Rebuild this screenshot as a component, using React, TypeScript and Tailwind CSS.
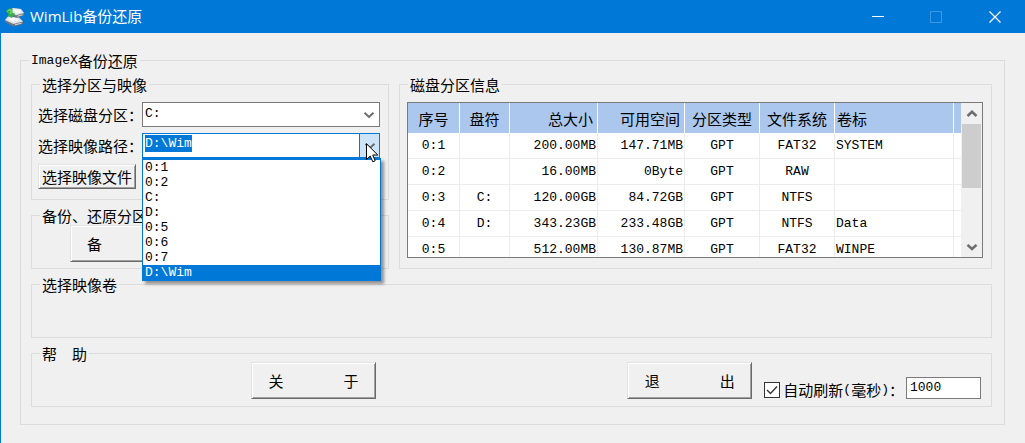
import React, { useEffect, useRef, useState } from "react";

type Partition = {
   id: string;
   letter: string;
   total: string;
   free: string;
   type: string;
   fs: string;
   label: string;
};

const partitions: Partition[] = [
   { id: "0:1", letter: "", total: "200.00MB", free: "147.71MB", type: "GPT", fs: "FAT32", label: "SYSTEM" },
   { id: "0:2", letter: "", total: "16.00MB", free: "0Byte", type: "GPT", fs: "RAW", label: "" },
   { id: "0:3", letter: "C:", total: "120.00GB", free: "84.72GB", type: "GPT", fs: "NTFS", label: "" },
   { id: "0:4", letter: "D:", total: "343.23GB", free: "233.48GB", type: "GPT", fs: "NTFS", label: "Data" },
   { id: "0:5", letter: "", total: "512.00MB", free: "130.87MB", type: "GPT", fs: "FAT32", label: "WINPE" },
];

const paths = ["0:1", "0:2", "C:", "D:", "0:5", "0:6", "0:7", "D:\\Wim"];

type GroupProps = { title: React.ReactNode; className?: string; children?: React.ReactNode };
function Group({ title, className = "", children }: GroupProps) {
   return (
      <fieldset className={`min-w-0 border border-[#dcdcdc] ${className}`}>
         <legend className="ml-2 flex h-[17px] items-center whitespace-pre px-0.5 leading-[17px]">{title}</legend>
         {children}
      </fieldset>
   );
}

function PushButton({ className = "", children }: { className?: string; children: React.ReactNode }) {
   return (
      <button
         type="button"
         className={`shrink-0 whitespace-pre border border-t-[#e3e3e3] border-l-[#e3e3e3] border-r-[#696969] border-b-[#696969] bg-[#f0f0f0] shadow-[inset_1px_1px_#ffffff,inset_-1px_-1px_#a0a0a0] ${className}`}
      >
         {children}
      </button>
   );
}

function Chevron({ up = false, className = "" }: { up?: boolean; className?: string }) {
   return (
      <svg viewBox="0 0 12 8" className={`h-2 w-3 fill-none stroke-[#6d6d6d] ${className}`}>
         <path d={up ? "M1.5 6 L6 1.8 L10.5 6" : "M1.5 1.8 L6 6 L10.5 1.8"} />
      </svg>
   );
}

function AppIcon() {
   return (
      <svg viewBox="0 0 22 22" className="h-[22px] w-[22px]">
         {/* lower drive */}
         <path d="M1 14 L4 10.5 L15 11.5 L19 15.5 L19 18 L10 20.5 L8.5 20 L1 16 Z" fill="#70777d" />
         <path d="M1 14 L4 10.5 L15 11.5 L19 15.5 L9.5 18 Z" fill="#dfe3e6" />
         <path d="M4 13.5 L6 11.800 L13 12.5 L15 14.500 L9 16 Z" fill="#f7f8f9" />
         <path d="M11 18.800 L17.500 17.200" stroke="#d5dadd" />
         {/* upper drive */}
         <path d="M5 5 L9 2 L17 3 L20 7 L20 9.500 L12 11.800 L5 8 Z" fill="#70777d" />
         <path d="M5 5 L9 2 L17 3 L20 7 L12 9.200 Z" fill="#e3e7ea" />
         <path d="M9 4.500 L11 3.300 L16 4 L17.500 6.300 L12.500 7.500 Z" fill="#f7f8f9" />
         <path d="M13.500 10.200 L18.500 8.800" stroke="#d5dadd" />
         {/* restore arrow */}
         <path d="M2 5.500 C3 3 6 2 8.500 3 L8.500 7 L11 7.500 L7.500 12 L3.500 9 L5 8.500 Z" fill="#35b53c" />
         <path d="M3.500 5.500 C4.500 4 6 3.600 7.200 4 L6.800 8" fill="none" stroke="#93e07f" />
      </svg>
   );
}

function Pointer({ className = "" }: { className?: string }) {
   return (
      <svg viewBox="0 0 13 20" className={`h-5 w-[13px] ${className}`}>
         <path d="M0.5 0.8 L0.5 16.500 L4.200 13 L6.800 18.800 L9.200 17.700 L6.700 12 L11.800 12 Z" fill="#fff" stroke="#000" />
      </svg>
   );
}

function TitleBar() {
   return (
      <header className="flex h-[33px] items-center bg-[#0078d7] pl-1 text-white">
         <AppIcon />
         <h1 className="ml-1 flex-1 font-['Open_Sans','Noto_Sans_CJK_SC',sans-serif]">WimLib备份还原</h1>
         <button type="button" aria-label="最小化" className="flex h-full w-[58px] items-center justify-center">
            <svg viewBox="0 0 12 12" className="h-3 w-3 stroke-white">
               <path d="M0 5.500 H12" />
            </svg>
         </button>
         <button type="button" aria-label="最大化" disabled className="flex h-full w-[58px] items-center justify-center">
            <svg viewBox="0 0 12 12" className="h-3 w-3 fill-none stroke-[#3a98e1]">
               <rect x="0.5" y="0.5" width="11" height="11" />
            </svg>
         </button>
         <button type="button" aria-label="关闭" className="flex h-full w-[60px] items-center justify-center">
            <svg viewBox="0 0 12 12" className="h-3 w-3 stroke-white">
               <path d="M0.5 0.5 L11.500 11.500 M11.500 0.5 L0.5 11.500" strokeWidth="1.2" />
            </svg>
         </button>
      </header>
   );
}

function PathCombo() {
   const [value, setValue] = useState("D:\\Wim");
   const inputRef = useRef<HTMLInputElement>(null);

   useEffect(() => {
      inputRef.current?.focus();
      inputRef.current?.select();
   }, []);

   return (
      <div className="relative flex h-[25px] min-w-0 flex-1 border border-[#0078d7] bg-white">
         <input
            id="image-path"
            ref={inputRef}
            value={value}
            onChange={(e) => setValue(e.target.value)}
            className="mb-1 min-w-0 flex-1 pl-0.5 font-['Liberation_Mono',monospace] text-[13px] outline-none selection:bg-[#0078d7] selection:text-white"
         />
         <button type="button" aria-label="展开" className="flex w-5 items-center justify-center border-l border-[#0078d7] bg-[#cce4f7]">
            <Chevron className="stroke-2" />
         </button>
         <Pointer className="absolute top-[9px] right-0 z-20" />

         {/* Opened list */}
         <ul
            role="listbox"
            className="absolute top-6 -right-0.5 -left-px z-10 border border-t-2 border-[#0078d7] bg-white font-['Liberation_Mono',monospace] text-[13px] leading-[15px] shadow-[3px_3px_3px_rgba(0,0,0,0.4)]"
         >
            {paths.map((path) => (
               <li
                  key={path}
                  role="option"
                  aria-selected={path === value}
                  onClick={() => setValue(path)}
                  className={path === value ? "bg-[#0078d7] pl-0.5 text-white" : "pl-0.5"}
               >
                  {path}
               </li>
            ))}
         </ul>
      </div>
   );
}

function PartitionTable() {
   const head = "border-r border-white font-normal";
   const cell = "border-r border-b border-[#ececec]";

   return (
      <div className="mt-[9px] mr-2 mb-[10px] ml-[7px] flex h-[156px] overflow-hidden border border-[#7a7a7a] bg-white">
         <div className="min-w-0 flex-1 overflow-hidden">
            <table className="w-full table-fixed border-separate border-spacing-0">
               <colgroup>
                  <col className="w-[52px]" />
                  <col className="w-[50px]" />
                  <col className="w-[88px]" />
                  <col className="w-[87px]" />
                  <col className="w-[75px]" />
                  <col className="w-[75px]" />
                  <col />
                  <col className="w-[7px]" />
               </colgroup>
               <thead>
                  <tr className="h-[30px] bg-[#abc7ed]">
                     <th className={head}>序号</th>
                     <th className={head}>盘符</th>
                     <th className={`${head} pr-1 text-right`}>总大小</th>
                     <th className={`${head} pr-1 text-right`}>可用空间</th>
                     <th className={head}>分区类型</th>
                     <th className={head}>文件系统</th>
                     <th className={`${head} pl-0.5 text-left`}>卷标</th>
                     <th></th>
                  </tr>
               </thead>
               <tbody className="font-['Liberation_Mono',monospace] text-[13px]">
                  {partitions.map((item) => (
                     <tr key={item.id} className="h-[26px] text-center">
                        <td className={cell}>{item.id}</td>
                        <td className={cell}>{item.letter}</td>
                        <td className={`${cell} pr-px text-right`}>{item.total}</td>
                        <td className={`${cell} pr-px text-right`}>{item.free}</td>
                        <td className={cell}>{item.type}</td>
                        <td className={cell}>{item.fs}</td>
                        <td className={`${cell} pl-px text-left`}>{item.label}</td>
                        <td className="border-b border-[#ececec]"></td>
                     </tr>
                  ))}
               </tbody>
            </table>
         </div>

         {/* Scrollbar */}
         <div className="flex w-[21px] flex-col items-center bg-[#f0f0f0] px-px">
            <div className="flex h-[21px] items-center">
               <Chevron up className="stroke-[2.500]" />
            </div>
            <div className="h-16 w-full bg-[#cdcdcd]"></div>
            <div className="mt-auto flex h-[21px] items-center">
               <Chevron className="stroke-[2.500]" />
            </div>
         </div>
      </div>
   );
}

export default function App() {
   const [autoRefresh, setAutoRefresh] = useState(true);
   const [interval, setRefreshInterval] = useState("1000");

   return (
      <div className="min-h-screen bg-[#f0f0f0] font-['Noto_Sans_CJK_SC',sans-serif] text-[15px] leading-[17px] text-black">
         <TitleBar />
         <main className="min-h-[410px] border-l border-[#0078d7] pt-[19px] pr-5 pl-[19px]">
            <Group
               title={
                  <>
                     <span className="font-['Liberation_Mono',monospace] text-[13px]">ImageX</span>备份还原
                  </>
               }
            >
               <div className="flex flex-col gap-[7px] pt-[7px] pr-3 pb-[17px] pl-[10px]">
                  <div className="flex gap-[10px]">
                     <div className="flex w-[358px] shrink-0 flex-col gap-[7px]">
                        <Group title="选择分区与映像">
                           <div className="flex flex-col gap-1.5 pt-[9px] pr-2 pb-[10px] pl-1.5">
                              <div className="flex items-center">
                                 <label htmlFor="partition" className="w-[104px] shrink-0 whitespace-nowrap">
                                    选择磁盘分区：
                                 </label>
                                 <div className="relative min-w-0 flex-1">
                                    <select
                                       id="partition"
                                       defaultValue="C:"
                                       className="block h-[25px] w-full appearance-none border border-[#7a7a7a] bg-white pb-0.5 pl-0.5 font-['Liberation_Mono',monospace] text-[13px]"
                                    >
                                       <option>C:</option>
                                       <option>D:</option>
                                    </select>
                                    <Chevron className="pointer-events-none absolute top-[9px] right-[5px] stroke-2" />
                                 </div>
                              </div>
                              <div className="flex items-center">
                                 <label htmlFor="image-path" className="w-[104px] shrink-0 whitespace-nowrap">
                                    选择映像路径：
                                 </label>
                                 <PathCombo />
                              </div>
                              <PushButton className="h-[25px] w-[98px] self-start">选择映像文件</PushButton>
                           </div>
                        </Group>
                        <Group title="备份、还原分区">
                           <div className="flex pt-px pb-1.5 pl-[38px]">
                              <PushButton className="h-[37px] w-[125px] pl-4 text-left">备</PushButton>
                           </div>
                        </Group>
                     </div>
                     <Group title="磁盘分区信息" className="flex-1">
                        <PartitionTable />
                     </Group>
                  </div>

                  <Group title="选择映像卷">
                     <div className="h-11"></div>
                  </Group>

                  <Group title="帮　助">
                     <div className="flex items-end pr-[10px] pb-[7px] pl-[219px]">
                        <PushButton className="h-[37px] w-[125px]">关　　　　于</PushButton>
                        <PushButton className="ml-auto h-[37px] w-[125px]">退　　　　出</PushButton>
                        <label className="ml-3 flex items-center whitespace-nowrap pb-px">
                           <span className="relative mr-[3px] h-4 w-4">
                              <input
                                 type="checkbox"
                                 checked={autoRefresh}
                                 onChange={(e) => setAutoRefresh(e.target.checked)}
                                 className="peer block h-4 w-4 appearance-none border border-[#333333] bg-white"
                              />
                              <svg
                                 viewBox="0 0 16 16"
                                 className="pointer-events-none absolute inset-0 hidden h-4 w-4 fill-none stroke-[#333333] peer-checked:block"
                              >
                                 <path d="M3 8 L6.500 11.500 L13 4.500" strokeWidth="1.4" />
                              </svg>
                           </span>
                           自动刷新<span className="font-['Liberation_Mono',monospace] text-[13px]">(</span>毫秒
                           <span className="font-['Liberation_Mono',monospace] text-[13px]">)</span>：
                        </label>
                        <input
                           aria-label="毫秒"
                           value={interval}
                           onChange={(e) => setRefreshInterval(e.target.value)}
                           className="ml-0.5 h-[22px] w-[75px] border border-[#7a7a7a] bg-white pb-0.5 pl-[3px] font-['Liberation_Mono',monospace] text-[13px] outline-none"
                        />
                     </div>
                  </Group>
               </div>
            </Group>
         </main>
      </div>
   );
}
